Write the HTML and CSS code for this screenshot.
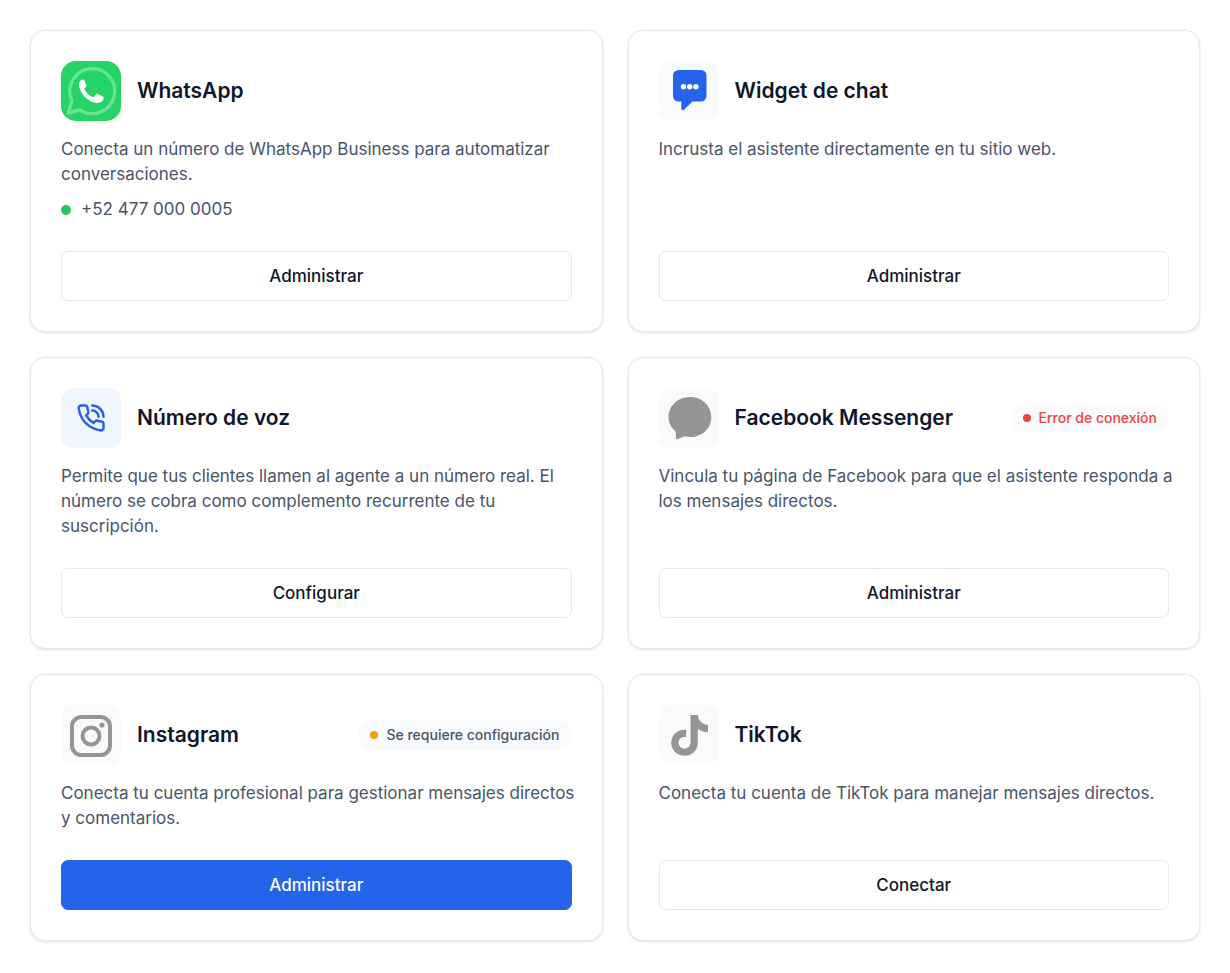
FILE: index.html
```html
<!DOCTYPE html>
<html lang="es">
<head>
    <meta charset="UTF-8">
    <meta name="viewport" content="width=device-width, initial-scale=1.0">
    <title>Canales</title>
    <link rel="stylesheet" href="styles.css">
</head>
<body>

<main class="channels">
    <section class="card">
        <div class="card-header">
            <div class="icon icon-whatsapp">
                <svg viewBox="0 0 60 60" aria-hidden="true">
                    <path d="M7.300 52 11 39.800A22.500 22.500 0 1 1 18.800 48.800Z" fill="none" stroke="#67e394" stroke-width="3.400" stroke-linejoin="round"/>
                    <path d="M22.200 18.500c-2.800 0-4.700 3-4.200 6.200C19.400 33.500 28 41.600 36 42c3.700.1 6.800-2.300 6.700-5.200-.1-.8-.7-1.200-1.400-1.600l-4.600-2.300c-.8-.3-1.300-.1-1.800.5l-1.800 2.200c-.4.5-1 .6-1.700.3-3.400-1.500-5.900-3.900-7.800-7.200-.3-.6-.2-1 .2-1.500l1.400-1.700c.4-.5.5-1 .2-1.600l-1.900-4.400c-.3-.7-.6-1-1.300-1Z" fill="#fff"/>
                </svg>
            </div>
            <h2>WhatsApp</h2>
        </div>
        <p class="description">Conecta un número de WhatsApp Business para automatizar conversaciones.</p>
        <p class="phone"><span class="dot dot-green"></span>+52 477 000 0005</p>
        <button class="btn" type="button">Administrar</button>
    </section>

    <section class="card">
        <div class="card-header">
            <div class="icon">
                <svg viewBox="0 0 60 60" aria-hidden="true">
                    <path d="M19.500 9H42a5.500 5.500 0 0 1 5.500 5.500v20.500a5.500 5.500 0 0 1-5.500 5.500h-8.500l-8.500 8.200c-1.200 1-2.700.4-2.700-1.200v-7h-2.800a5.500 5.500 0 0 1-5.500-5.500V14.500A5.500 5.500 0 0 1 19.500 9Z" fill="#2563eb"/>
                    <circle cx="24.500" cy="25.700" r="2.700" fill="#fff"/>
                    <circle cx="30.700" cy="25.700" r="2.700" fill="#fff"/>
                    <circle cx="36.900" cy="25.700" r="2.700" fill="#fff"/>
                </svg>
            </div>
            <h2>Widget de chat</h2>
        </div>
        <p class="description">Incrusta el asistente directamente en tu sitio web.</p>
        <button class="btn" type="button">Administrar</button>
    </section>

    <section class="card">
        <div class="card-header">
            <div class="icon icon-voice">
                <svg class="small" viewBox="0 0 24 24" fill="none" stroke="#2563eb" stroke-width="2" stroke-linecap="round" stroke-linejoin="round" aria-hidden="true">
                    <path d="M22 16.920v3a2 2 0 0 1-2.180 2 19.790 19.790 0 0 1-8.630-3.070 19.500 19.500 0 0 1-6-6 19.790 19.790 0 0 1-3.070-8.670A2 2 0 0 1 4.110 2h3a2 2 0 0 1 2 1.720 12.840 12.840 0 0 0 .7 2.810 2 2 0 0 1-.45 2.110L8.090 9.910a16 16 0 0 0 6 6l1.270-1.270a2 2 0 0 1 2.110-.45 12.840 12.840 0 0 0 2.810.7A2 2 0 0 1 22 16.920z"/>
                    <path d="M13 2a9 9 0 0 1 9 9"/>
                    <path d="M13 6a5 5 0 0 1 5 5"/>
                </svg>
            </div>
            <h2>Número de voz</h2>
        </div>
        <p class="description">Permite que tus clientes llamen al agente a un número real. El número se cobra como complemento recurrente de tu suscripción.</p>
        <button class="btn" type="button">Configurar</button>
    </section>

    <section class="card">
        <div class="card-header">
            <div class="icon">
                <svg viewBox="0 0 60 60" aria-hidden="true">
                    <path d="M31 9c12 0 21.300 8.600 21.300 20.200S43 49 31 49c-2 0-3.900-.2-5.600-.7l-6.200 2.700c-1.300.5-2.300 0-2.300-1.300l-.2-6.300C12.300 40 9.600 35 9.600 29.200 9.600 17.600 19 9 31 9Z" fill="#949596"/>
                </svg>
            </div>
            <h2>Facebook Messenger</h2>
            <span class="badge badge-error"><span class="dot dot-red"></span>Error de conexión</span>
        </div>
        <p class="description">Vincula tu página de Facebook para que el asistente responda a los mensajes directos.</p>
        <button class="btn" type="button">Administrar</button>
    </section>

    <section class="card">
        <div class="card-header">
            <div class="icon">
                <svg viewBox="0 0 60 60" aria-hidden="true">
                    <rect x="11" y="12" width="38" height="38" rx="9.500" fill="none" stroke="#949596" stroke-width="4"/>
                    <circle cx="30" cy="31" r="8.500" fill="none" stroke="#949596" stroke-width="4"/>
                    <circle cx="41" cy="20" r="2.600" fill="#949596"/>
                </svg>
            </div>
            <h2>Instagram</h2>
            <span class="badge"><span class="dot dot-amber"></span>Se requiere configuración</span>
        </div>
        <p class="description">Conecta tu cuenta profesional para gestionar mensajes directos y comentarios.</p>
        <button class="btn btn-primary" type="button">Administrar</button>
    </section>

    <section class="card">
        <div class="card-header">
            <div class="icon">
                <svg viewBox="0 0 60 60" aria-hidden="true">
                    <path d="M31.500 10h7.300c.5 5.300 4.500 9.500 10.200 10v7.300c-3.800.1-7.200-1.100-10.200-3.200v13.700c0 7.500-5.700 13-13.200 13s-13.400-5.800-13.400-13c0-7.800 6.700-13.800 15-13v7.400c-4-1.100-7.600 1.500-7.600 5.500 0 3.400 2.600 5.900 6 5.900 3.500 0 5.900-2.500 5.900-6.300Z" fill="#949596"/>
                </svg>
            </div>
            <h2>TikTok</h2>
        </div>
        <p class="description">Conecta tu cuenta de TikTok para manejar mensajes directos.</p>
        <button class="btn" type="button">Conectar</button>
    </section>
</main>

</body>
</html>
```
FILE: styles.css
```css
* { box-sizing: border-box; }
body { font-family: Inter, "Liberation Sans", sans-serif; margin: 0; background: #fff; color: #0f172a; }
h2, p { margin: 0; }

.channels { display: grid; grid-template-columns: 1fr 1fr; gap: 25px; padding: 30px; }
.card { display: flex; flex-direction: column; padding: 30px; background: #fff; border: 1px solid #e5e7eb; border-radius: 15px; box-shadow: 0 1px 3px rgba(0, 0, 0, 0.12); }

.card-header { display: flex; align-items: center; gap: 16px; margin-bottom: 16px; }
.card-header h2 { font-size: 21px; line-height: 30px; font-weight: 600; white-space: nowrap; }

.icon { display: flex; align-items: center; justify-content: center; flex: none; width: 60px; height: 60px; border-radius: 12px; background: #f8fafc; }
.icon svg { width: 60px; height: 60px; }
.icon .small { width: 30px; height: 30px; }
.icon-whatsapp { background: #25d366; border-radius: 15px; }
.icon-voice { background: #eff6ff; }

.description, .phone { font-size: 17px; line-height: 25px; color: #475569; }
/* text may run a little into the card padding */
.description { margin-right: -10px; }
.phone { display: flex; align-items: center; gap: 10px; margin-top: 10px; }

.dot { flex: none; width: 8px; height: 8px; border-radius: 50%; }
.dot-green { width: 10px; height: 10px; background: #22c55e; }
.dot-red { background: #ef4444; }
.dot-amber { background: #f59e0b; }

.badge { display: flex; align-items: center; gap: 8px; margin-left: auto; padding: 5px 12px; border-radius: 15px; background: #f8fafc; color: #475569; font-size: 14px; line-height: 20px; font-weight: 500; white-space: nowrap; }
.badge-error { color: #ef4444; }

/* keeps the buttons of a row on one line */
.card .btn { margin-top: auto; }
.description:nth-last-child(2), .phone { margin-bottom: 29px; }

.btn { width: 100%; height: 50px; padding: 0 20px; border: 1px solid #e5e7eb; border-radius: 7px; background: #fff; color: #0f172a; font-family: inherit; font-size: 17px; font-weight: 500; cursor: pointer; }
.btn-primary { background: #2563eb; border-color: #2563eb; color: #fff; }
```
